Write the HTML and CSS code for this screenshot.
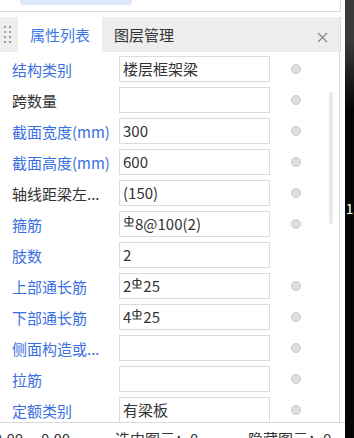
FILE: index.html
```
<!doctype html>
<html lang="zh">
    <head>
        <meta charset="utf-8">
        <title>属性列表</title>
        <link rel="stylesheet" href="styles.css">
    </head>
    <body>
        <div class="app">
            <div class="top">
                <div class="pill"></div>
            </div>
            <div class="tabs">
                <div class="grip">
                    <i></i><i></i><i></i><i></i><i></i><i></i><i></i><i></i>
                </div>
                <div class="tab active">属性列表</div>
                <div class="tab">图层管理</div>
                <div class="close">
                    <svg width="11" height="11" viewBox="0 0 11 11"><path d="M1 1L10 10M10 1L1 10" stroke="#8a8a8a" stroke-width="1.3"/></svg>
                </div>
            </div>
            <div class="list">
                <div class="row"><span class="label blue">结构类别</span><span class="val">楼层框架梁</span><span class="dot"></span></div>
                <div class="row"><span class="label">跨数量</span><span class="val"></span><span class="dot"></span></div>
                <div class="row"><span class="label blue">截面宽度(mm)</span><span class="val">300</span><span class="dot"></span></div>
                <div class="row"><span class="label blue">截面高度(mm)</span><span class="val">600</span><span class="dot"></span></div>
                <div class="row"><span class="label">轴线距梁左...</span><span class="val">(150)</span><span class="dot"></span></div>
                <div class="row"><span class="label blue">箍筋</span><span class="val"><svg class="bar" width="10" height="11" viewBox="0 0 10 11"><rect x="1" y="2.5" width="8" height="4.5" rx="1.5" fill="none" stroke="#333" stroke-width="1.2"/><path d="M5 0V10M0.5 10H9.5" stroke="#333" stroke-width="1.2"/></svg>8@100(2)</span><span class="dot"></span></div>
                <div class="row"><span class="label blue">肢数</span><span class="val">2</span><span class="nodot"></span></div>
                <div class="row"><span class="label blue">上部通长筋</span><span class="val">2<svg class="bar" width="10" height="11" viewBox="0 0 10 11"><rect x="1" y="2.5" width="8" height="4.5" rx="1.5" fill="none" stroke="#333" stroke-width="1.2"/><path d="M5 0V10M0.5 10H9.5" stroke="#333" stroke-width="1.2"/></svg>25</span><span class="dot"></span></div>
                <div class="row"><span class="label blue">下部通长筋</span><span class="val">4<svg class="bar" width="10" height="11" viewBox="0 0 10 11"><rect x="1" y="2.5" width="8" height="4.5" rx="1.5" fill="none" stroke="#333" stroke-width="1.2"/><path d="M5 0V10M0.5 10H9.5" stroke="#333" stroke-width="1.2"/></svg>25</span><span class="dot"></span></div>
                <div class="row"><span class="label blue">侧面构造或...</span><span class="val"></span><span class="dot"></span></div>
                <div class="row"><span class="label blue">拉筋</span><span class="val"></span><span class="dot"></span></div>
                <div class="row"><span class="label blue">定额类别</span><span class="val">有梁板</span><span class="dot"></span></div>
                <div class="scroll"></div>
            </div>
            <div class="status">
                <span class="s1">2.00</span>
                <span class="s2">0.00</span>
                <span class="s3">选中图元：0</span>
                <span class="s4">隐藏图元：0</span>
            </div>
        </div>
        <div class="edge">
            <span class="mark">1</span>
        </div>
    </body>
</html>
```
FILE: styles.css
```
body {
    margin: 0;
    width: 354px;
    height: 438px;
    overflow: hidden;
    display: flex;
    background: #050505;
    font-family: "Noto Sans CJK SC", "Noto Sans", sans-serif;
    font-size: 14px;
    color: #333;
}
.app {
    width: 345px;
    height: 438px;
    background: #fff;
    display: flex;
    flex-direction: column;
    flex-shrink: 0;
}
.top {
    height: 11px;
    width: 340px;
    border-bottom: 1px solid #dadada;
    border-right: 1px solid #dadada;
    box-sizing: content-box;
    margin-bottom: 5px;
}
.pill {
    margin-left: 20px;
    width: 112px;
    height: 5px;
    background: #dde8fa;
    border-radius: 0 0 4px 4px;
}
.tabs {
    height: 35px;
    width: 340px;
    background: #ededed;
    display: flex;
    align-items: stretch;
    border-right: 1px solid #dadada;
}
.grip {
    width: 9px;
    margin: 9px 5px 0 4px;
    height: 17px;
    display: grid;
    grid-template-columns: 2px 2px;
    column-gap: 3px;
    row-gap: 3px;
}
.grip i {
    width: 2px;
    height: 2px;
    background: #9a9a9a;
}
.tab {
    font-size: 15px;
    line-height: 35px;
    width: 84px;
    text-align: center;
    color: #333;
}
.tab.active {
    background: #fff;
    color: #3d78e6;
}
.close {
    margin-left: auto;
    margin-right: 12px;
    padding-top: 10px;
}
.list {
    position: relative;
    height: 370px;
    width: 340px;
    overflow: hidden;
    border-right: 1px solid #dadada;
    padding-top: 4px;
    box-sizing: border-box;
    display: flex;
    flex-direction: column;
    gap: 5px;
}
.row {
    display: flex;
    align-items: center;
    height: 26px;
    flex-shrink: 0;
    padding-left: 12px;
}
.label {
    width: 107px;
    font-size: 15px;
    color: #333;
    white-space: nowrap;
}
.label.blue {
    color: #3a6fe2;
}
.val {
    width: 151px;
    height: 26px;
    box-sizing: border-box;
    border: 1px solid #dcdcdc;
    padding-left: 3px;
    font-size: 15px;
    line-height: 24px;
    color: #333;
    white-space: nowrap;
    overflow: hidden;
}
.bar {
    vertical-align: 3px;
    margin: 0 1px;
}
.dot, .nodot {
    width: 10px;
    height: 10px;
    margin-left: 21px;
    box-sizing: border-box;
    border-radius: 50%;
}
.dot {
    background: #dedede;
    border: 1px solid #cacaca;
}
.scroll {
    position: absolute;
    left: 329px;
    top: 40px;
    width: 4px;
    height: 132px;
    border-radius: 2px;
    background: #e9e9e9;
}
.status {
    height: 15px;
    border-top: 1px solid #dadada;
    position: relative;
    font-size: 15px;
    color: #333;
    white-space: nowrap;
}
.status span {
    position: absolute;
    top: 7px;
    line-height: 18px;
}
.s1 { left: -6px; }
.s2 { left: 41px; }
.s3 { left: 115px; }
.s4 { left: 248px; }
.edge {
    flex: 1;
    position: relative;
    background: linear-gradient(#3a3a3a 0, #3a3a3a 40px, #050505 110px);
}
.mark {
    position: absolute;
    left: 1px;
    top: 199px;
    color: #fff;
    font-size: 13px;
    text-shadow: 0 0 1px #2a8a2a;
}
```
